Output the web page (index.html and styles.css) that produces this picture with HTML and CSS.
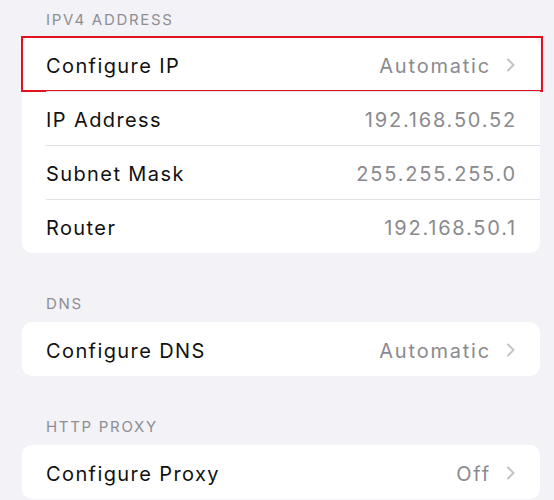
FILE: index.html
```html
<!DOCTYPE html>
<html>
<head>
<meta charset="utf-8">
<link rel="stylesheet" href="styles.css">
</head>
<body>
<div class="page">
  <div class="section first">
    <div class="header">IPv4 Address</div>
    <div class="card">
      <div class="row highlighted">
        <span class="label">Configure IP</span>
        <span class="value">Automatic<svg class="chev" width="10" height="14" viewBox="0 0 10 14"><path d="M2 1.5 L7.5 7 L2 12.5" fill="none" stroke="#c4c4c7" stroke-width="2" stroke-linecap="round" stroke-linejoin="round"/></svg></span>
      </div>
      <div class="row">
        <span class="label">IP Address</span>
        <span class="value plain">192.168.50.52</span>
      </div>
      <div class="row">
        <span class="label">Subnet Mask</span>
        <span class="value plain">255.255.255.0</span>
      </div>
      <div class="row">
        <span class="label">Router</span>
        <span class="value plain">192.168.50.1</span>
      </div>
    </div>
  </div>
  <div class="section">
    <div class="header">DNS</div>
    <div class="card">
      <div class="row">
        <span class="label">Configure DNS</span>
        <span class="value">Automatic<svg class="chev" width="10" height="14" viewBox="0 0 10 14"><path d="M2 1.5 L7.5 7 L2 12.5" fill="none" stroke="#c4c4c7" stroke-width="2" stroke-linecap="round" stroke-linejoin="round"/></svg></span>
      </div>
    </div>
  </div>
  <div class="section">
    <div class="header">HTTP Proxy</div>
    <div class="card">
      <div class="row">
        <span class="label">Configure Proxy</span>
        <span class="value">Off<svg class="chev" width="10" height="14" viewBox="0 0 10 14"><path d="M2 1.5 L7.5 7 L2 12.5" fill="none" stroke="#c4c4c7" stroke-width="2" stroke-linecap="round" stroke-linejoin="round"/></svg></span>
      </div>
    </div>
  </div>
</div>
</body>
</html>
```

FILE: styles.css
```css
html, body {
  margin: 0;
  padding: 0;
  background: #f2f2f7;
}
body {
  font-family: Inter, "Noto Sans", sans-serif;
  width: 554px;
  height: 500px;
  overflow: hidden;
}
.page {
  display: flex;
  flex-direction: column;
  padding: 0 14px 0 22px;
}
.section {
  display: flex;
  flex-direction: column;
  margin-top: 41px;
}
.section.first {
  margin-top: 10px;
}
.header {
  font-size: 15px;
  line-height: 20px;
  color: #8e8e93;
  text-transform: uppercase;
  padding-left: 24px;
  margin-bottom: 8px;
  letter-spacing: 1.7px;
}
.section.first .header {
  margin-bottom: 7px;
}
.card {
  background: #ffffff;
  border-radius: 10px;
  display: flex;
  flex-direction: column;
}
.row {
  height: 54px;
  display: flex;
  align-items: center;
  justify-content: space-between;
  margin-left: 24px;
  padding-right: 24px;
  padding-top: 3px;
  border-top: 1px solid #e2e2e6;
  box-sizing: border-box;
  font-size: 20px;
  position: relative;
}
.row:first-child {
  border-top: none;
}
.label {
  color: #111111;
  letter-spacing: 1.4px;
}
.value {
  color: #8a8a8e;
  display: flex;
  align-items: center;
  letter-spacing: 1.8px;
}
.value.plain {
  margin-right: -1px;
}
.chev {
  margin-left: 15px;
  margin-top: -2px;
}
.row.highlighted::after {
  content: "";
  position: absolute;
  left: -25px;
  right: -3px;
  top: -1px;
  bottom: -1px;
  border: 2px solid #e0141e;
  pointer-events: none;
}
```
